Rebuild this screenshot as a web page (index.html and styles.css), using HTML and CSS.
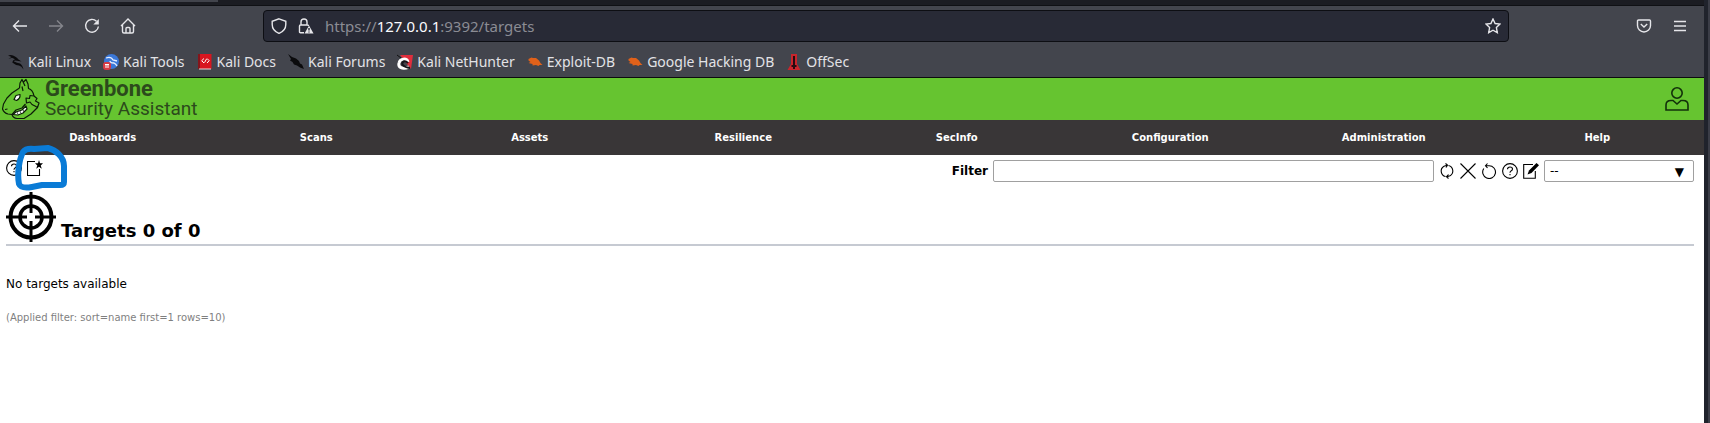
FILE: index.html
```
<!DOCTYPE html>
<html lang="en">
<head>
<meta charset="utf-8">
<title>Greenbone Security Assistant - Targets</title>
<link rel="stylesheet" href="styles.css">
</head>
<body>
<div class="browser">
  <div class="tabstrip"><div class="tab"></div></div>
  <div class="toolbar">
    <div class="nav-buttons">
      <button class="tool" aria-label="Back"><svg width="16" height="16" viewBox="0 0 16 16"><path d="M15 8H1.500M7 2.500L1.500 8L7 13.500"/></svg></button>
      <button class="tool dim" aria-label="Forward"><svg width="16" height="16" viewBox="0 0 16 16"><path d="M1 8H14.500M9 2.500L14.500 8L9 13.500"/></svg></button>
      <button class="tool" aria-label="Reload"><svg width="16" height="16" viewBox="0 0 16 16"><path d="M12.500 3.200A6.400 6.400 0 1 0 14.400 8.500"/><path class="solid" d="M14.800 1V6.500H9.300Z"/></svg></button>
      <button class="tool" aria-label="Home"><svg width="16" height="16" viewBox="0 0 16 16"><path d="M1 8L8 1L15 8M2.500 6.800V13.500Q2.500 15 4 15H12Q13.500 15 13.500 13.500V6.800M6 15V10.500Q6 9.500 7 9.500H9Q10 9.500 10 10.500V15"/></svg></button>
    </div>
    <div class="address">
      <svg width="16" height="16" viewBox="0 0 16 16"><path d="M8 .8L14.800 3.300V6.500C14.800 11 11.500 14 8 15.400C4.500 14 1.200 11 1.200 6.500V3.300Z"/></svg>
      <svg width="16" height="16" viewBox="0 0 16 16"><path d="M6 14.800H2.500Q1.500 14.800 1.500 13.800V8Q1.500 7 2.500 7H9.500Q10.500 7 10.500 8M3 7V4Q3 1 6 1T9 4V7"/><path class="solid" d="M11 7.500L15.500 15.500H6.500Z"/><path class="mark" d="M11 10V12.500M11 13.500V14.500"/></svg>
      <div class="url">https://<span class="host">127.0.0.1</span>:9392/targets</div>
      <svg width="16" height="16" viewBox="0 0 16 16"><path d="M8 1L10.100 5.500L15 6.100L11.400 9.500L12.300 14.600L8 12.200L3.700 14.600L4.600 9.500L1 6.100L5.900 5.500Z"/></svg>
    </div>
    <div class="tool-end">
      <button class="tool" aria-label="Pocket"><svg width="16" height="16" viewBox="0 0 16 16"><path d="M2.500 2H13.500Q14.500 2 14.500 3V7.500A6.500 6.500 0 0 1 1.500 7.500V3Q1.500 2 2.500 2ZM4.800 6L8 9L11.200 6"/></svg></button>
      <button class="tool" aria-label="Menu"><svg width="16" height="16" viewBox="0 0 16 16"><path d="M2 3.500H14M2 8H14M2 12.500H14"/></svg></button>
    </div>
  </div>
  <nav class="bookmarks" aria-label="Bookmarks">
    <a href="#"><svg width="16" height="16" viewBox="0 0 16 16"><path class="ink" d="M0 1.500Q4 0 7 2.500Q9 3.500 10.500 5.500L13.500 7.500L9 6.800Q6 6 6 7.500Q9 9 12 9.500Q14.500 11 15.500 15.500Q13.500 12 11 11.500Q7 11 4.300 8.500Q4.500 6 7 5.300L4 3.800L.5 5L3.500 2.900Z"/></svg>Kali Linux</a>
    <a href="#"><svg width="16" height="16" viewBox="0 0 16 16"><circle cx="8.500" cy="7.500" r="7.500" fill="#3b78d8"/><path d="M3 4Q8 2 10 6L14 7M7 7Q7 9 11 9Q13 10 14 12" fill="none" stroke="#e8f0ff" stroke-width="1.300"/><rect y="8" width="8" height="8" rx="3" fill="#d93a42"/><path d="M2 10.500H6M3 10.500V14M5 10.500V14" stroke="#fff" fill="none"/></svg>Kali Tools</a>
    <a href="#"><svg width="16" height="16" viewBox="0 0 16 16"><rect x="1.500" y="0" width="13" height="15" fill="#d8161f"/><path d="M2 0V15" stroke="#85151b" stroke-width="2"/><path d="M2 15H14" stroke="#e8d6d8" stroke-width="1"/><path d="M7 4.500L4.700 6.700L7 9M10 4.500L12.200 6.700L10 9M9.500 5L7.500 8.500" stroke="#fff" fill="none"/></svg>Kali Docs</a>
    <a href="#"><svg width="16" height="16" viewBox="0 0 16 16"><path class="ink" d="M0 0L4 3L8 4.500L11 7L12 9.500L14 10.500L16 15L12 13.500L9 11.500L6 10.500L4.500 8L2 6.500L3 5Z"/></svg>Kali Forums</a>
    <a href="#"><svg width="16" height="16" viewBox="0 0 16 16"><path d="M3 1H16L14 15Z" fill="#e02e3d"/><path d="M0 1L4 4" stroke="#111" stroke-width="1"/><path d="M12 13C5 16 1 13 2 9C3 4 10 4 11 8" stroke="#fff" stroke-width="3" fill="none"/><path d="M13 14C6 13 4 10 6 8Q8 6 11 9" stroke="#15151a" stroke-width="2" fill="none"/></svg>Kali NetHunter</a>
    <a href="#"><svg width="16" height="16" viewBox="0 0 16 16"><path class="bug" d="M1.500 5L4.500 3.500L6 4L9 4L12 6.500L13.500 9L15.500 11H12.500L11.500 12L9 11L5.500 11.500V10L1.500 9L3.500 8L1.500 6.500Z"/></svg>Exploit-DB</a>
    <a href="#"><svg width="16" height="16" viewBox="0 0 16 16"><path class="bug" d="M1.500 5L4.500 3.500L6 4L9 4L12 6.500L13.500 9L15.500 11H12.500L11.500 12L9 11L5.500 11.500V10L1.500 9L3.500 8L1.500 6.500Z"/></svg>Google Hacking DB</a>
    <a href="#"><svg width="16" height="16" viewBox="0 0 16 16"><path d="M5 0H11V10L14.500 16H1.500L5 10Z" fill="#c8252c"/><path d="M8 2V15M5.500 12H10.500" stroke="#260b10" stroke-width="2"/></svg>OffSec</a>
  </nav>

  <header class="brandbar">
    <a class="brand" href="#">
      <svg width="40" height="42" viewBox="0 0 40 42"><g fill="none" stroke="#0c1c08" stroke-width="1.200" stroke-linejoin="round"><path d="M19.500 10L20 5L22 1.500L25 8M23.500 4L26 1.500L28 6L28.500 10.500Q33 12 34 18"/><path d="M19.500 10L12 15L7 20L3.500 26L2.500 31Q4 35 8 36L12 36.500Q13 40 17 40.500L24 40.500L31 36L37.500 29.500"/><path d="M34 18L30 17.500L29.500 20.500L26 20L26.500 25L30 24L32 26.500L35 28L37.500 29.500L39 25L35.500 23L37 20.500L34 18"/><path d="M12 36.500L16 32L22 30L25.500 26M5 31.500L7.500 31M22 8.500L23 13"/><path d="M14 21.500L16 17.500L20 16.500Q20.500 20.500 16.500 22.500Z" fill="#fff"/><path d="M13 36.500L16 34L22 32L26 28L27 31L23 35L18 37Z" fill="#fff"/><path d="M17 34L18 36.500M20 33L21 35.500M23 31.500L24 34" stroke-width=".7"/></g></svg>
      <span class="wordmark"><span class="name">Greenbone</span><span class="product">Security Assistant</span></span>
    </a>
    <button class="user" aria-label="User"><svg width="24" height="24" viewBox="0 0 24 24"><g fill="none" stroke="#12300a" stroke-width="1.600"><circle cx="12" cy="6" r="5.200"/><path d="M1 23H23V18Q23 13.500 18 13.500H16L12 17L8 13.500H6Q1 13.500 1 18Z"/></g></svg></button>
  </header>
  <nav class="menu" aria-label="Main">
    <a href="#">Dashboards</a><a href="#">Scans</a><a href="#">Assets</a><a href="#">Resilience</a><a href="#">SecInfo</a><a href="#">Configuration</a><a href="#">Administration</a><a href="#">Help</a>
  </nav>

  <main class="content">
    <div class="actions">
      <div class="page-tools">
        <button class="icon" aria-label="Help"><svg width="16" height="16" viewBox="0 0 16 16"><circle cx="8" cy="8" r="7.400"/><path d="M5.500 6.200Q5.600 4 8 4Q10.500 4 10.500 6Q10.500 7.300 9 8Q8 8.500 8 9.800M8 11V12.300"/></svg></button>
        <button class="icon" aria-label="New Target"><svg width="16" height="16" viewBox="0 0 16 16"><path d="M8 1.500H.5V15.500H12.500V9"/><path class="black" d="M12 0L13 3.300H16L13.700 5.400L14.800 8.800L12 6.800L9.200 8.800L10.300 5.400L8 3.300H11Z"/></svg></button>
        <svg class="highlight" width="54" height="46" viewBox="0 0 54 46"><path d="M4 39C2 29 4 15 8 7Q11 3 19 4L33 3C41 5 49 12 49 21L49 37Q49 40 45 40L27 40L17 42Q6 44 4 39Z"/></svg>
      </div>
      <form class="filter">
        <label for="filter">Filter</label>
        <input id="filter" type="text">
        <div class="filter-icons">
          <button type="button" class="icon" aria-label="Update filter"><svg width="16" height="16" viewBox="0 0 16 16"><path d="M6.500 13.500A5.600 5.600 0 0 1 5 3.200L8 2.200M9.500 2.500A5.600 5.600 0 0 1 11 12.800L8 13.800M6.500 .5L8.500 2.200L7 4.500M9.500 11.500L7.500 13.800L9.500 15.500"/></svg></button>
          <button type="button" class="icon" aria-label="Remove filter"><svg width="16" height="16" viewBox="0 0 16 16"><path d="M.5 .5L15.500 15.500M15.500 .5L.5 15.500"/></svg></button>
          <button type="button" class="icon" aria-label="Reset filter"><svg width="16" height="16" viewBox="0 0 16 16"><path d="M2.800 5.500A6.400 6.400 0 1 0 8 2.700H4.500M6.500 .5L4.500 2.700L6.500 5"/></svg></button>
          <button type="button" class="icon" aria-label="Filter help"><svg width="16" height="16" viewBox="0 0 16 16"><circle cx="8" cy="8" r="7.400"/><path d="M5.500 6.200Q5.600 4 8 4Q10.500 4 10.500 6Q10.500 7.300 9 8Q8 8.500 8 9.800M8 11V12.300"/></svg></button>
          <button type="button" class="icon" aria-label="Edit filter"><svg width="16" height="16" viewBox="0 0 16 16"><path d="M10 1.500H.7V15.300H12.300V8"/><path class="black" d="M13.500 0L16 2.200L8.500 10L4.500 11.500L6 7.500Z"/></svg></button>
        </div>
        <div class="saved">
          <select aria-label="Saved filter"><option>--</option></select>
          <span class="arrow" aria-hidden="true">▼</span>
        </div>
      </form>
    </div>
    <div class="section">
      <svg width="50" height="50" viewBox="0 0 50 50"><g fill="none" stroke="#000"><circle cx="25" cy="25" r="20.500" stroke-width="4"/><circle cx="25" cy="25" r="11" stroke-width="3.500"/><path d="M25 0V21M25 29V50M0 25H21M29 25H50" stroke-width="3"/></g></svg>
      <h1>Targets 0 of 0</h1>
    </div>
    <p class="empty">No targets available</p>
    <p class="applied">(Applied filter: sort=name first=1 rows=10)</p>
  </main>
</div>
</body>
</html>
```
FILE: styles.css
```
* { box-sizing: border-box; }
body {
  margin: 0;
  min-height: 100vh;
  display: flex;
  background: #20232c;
  border-right: 2px solid #3b3d47;
  font-family: "DejaVu Sans", sans-serif;
  color: #000;
}
button { border: 0; padding: 0; background: none; display: flex; }
a { text-decoration: none; color: inherit; }
svg { display: block; flex: none; }
.browser { flex: 1; min-width: 0; margin-right: 4px; display: flex; flex-direction: column; background: #fff; }
.tabstrip { height: 6px; background: #1b1c22; border-bottom: 1px solid #0f1014; }
.tab { width: 218px; height: 2px; background: #42444c; }
.toolbar { height: 40px; display: flex; align-items: center; background: #43454d; padding: 0 16px 0 12px; }
.nav-buttons { width: 251px; display: flex; gap: 20px; }
.toolbar svg { fill: none; stroke: #e6e6ea; stroke-width: 1.4; }
.toolbar svg .solid { fill: #e6e6ea; stroke: none; }
.toolbar svg .mark { stroke: #282a36; }
.dim { opacity: .4; }
.address {
  flex: 1; height: 32px; padding: 0 7px; display: flex; align-items: center; gap: 11px;
  background: #282a36; border: 1px solid #0d0e13; border-radius: 4px;
}
.url { flex: 1; font: 15px/24px "Noto Sans", sans-serif; color: #8b8c94; }
.host { color: #fbfbfe; }
.tool-end { width: 179px; display: flex; justify-content: flex-end; gap: 20px; }
.bookmarks {
  height: 32px; padding: 0 8px; display: flex; align-items: center; gap: 12px;
  background: #43454d; border-bottom: 1px solid #0c0c0d;
  font: 14px/24px "Noto Sans", sans-serif; color: #e2e2e6;
}
.bookmarks a { display: flex; align-items: center; gap: 4px; }
.ink { fill: #0b0b0d; }
.bug { fill: #e0611a; }
.brandbar { height: 42px; padding-right: 15px; display: flex; align-items: center; justify-content: space-between; background: #66c430; }
.brand { display: flex; gap: 5px; color: #2c4a1c; }
.wordmark { display: flex; flex-direction: column; font-family: Roboto, sans-serif; }
.name { font-size: 22px; line-height: 22px; font-weight: 700; }
.product { font-size: 19px; line-height: 18px; }
.menu { height: 35px; margin-left: -4px; display: grid; grid-template-columns: repeat(8, 1fr); align-items: center; background: #393637; color: #fff; font-size: 10px; font-weight: 700; text-align: center; }
.content { padding: 5px 10px 0 6px; }
.actions { display: flex; justify-content: space-between; }
.page-tools { position: relative; display: flex; gap: 5px; }
.icon svg { fill: none; stroke: #000; stroke-width: 1.1; }
.icon .black { fill: #000; stroke: none; }
.highlight { position: absolute; left: 9px; top: -15px; fill: none; stroke: #0a7bd6; stroke-width: 6; stroke-linejoin: round; }
.filter { display: flex; align-items: center; gap: 5px; }
.filter label { font-size: 12px; font-weight: 700; }
.filter input { width: 441px; height: 22px; border: 1px solid #a0a0a0; border-radius: 2px; }
.filter-icons { display: flex; gap: 5px; }
.saved { position: relative; }
.saved select {
  display: block; width: 150px; height: 22px; padding: 0 5px; appearance: none;
  border: 1px solid #a0a0a0; border-radius: 2px; background: #fff; color: #000;
  font: 12px "DejaVu Sans", sans-serif;
}
.arrow { position: absolute; right: 10px; top: 4px; font-size: 12px; line-height: 16px; pointer-events: none; }
.section { margin-top: 10px; display: flex; align-items: flex-end; gap: 5px; border-bottom: 2px solid #c6cad2; padding-bottom: 2px; }
.section h1 { margin: 0; font-size: 18px; line-height: 22px; }
.empty { margin: 29px 0 0; font-size: 12px; line-height: 18px; }
.applied { margin: 18px 0 0; font-size: 10px; line-height: 14px; color: #7f7f7f; }
```
